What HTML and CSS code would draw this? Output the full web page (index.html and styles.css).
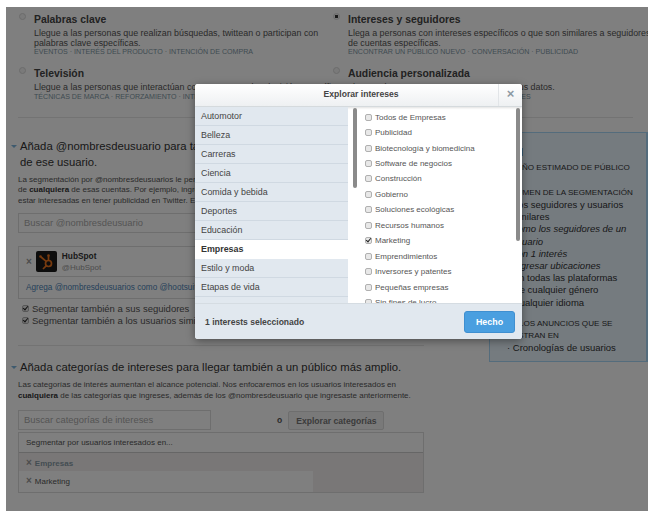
FILE: index.html
```html
<!DOCTYPE html>
<html lang="es">
<head>
  <meta charset="UTF-8">
  <title>Explorar intereses</title>
  <link rel="stylesheet" href="styles.css">
</head>
<body>

  <div class="screen">

    <div class="options">
      <div class="option">
        <input type="radio" name="kind">
        <div>
          <h3>Palabras clave</h3>
          <p>Llegue a las personas que realizan búsquedas, twittean o participan con<br>palabras clave específicas.</p>
          <p class="tags">EVENTOS · INTERÉS DEL PRODUCTO · INTENCIÓN DE COMPRA</p>
        </div>
      </div>
      <div class="option">
        <input type="radio" name="kind" checked>
        <div>
          <h3>Intereses y seguidores</h3>
          <p>Llega a personas con intereses específicos o que son similares a seguidores<br>de cuentas específicas.</p>
          <p class="tags">ENCONTRAR UN PÚBLICO NUEVO · CONVERSACIÓN · PUBLICIDAD</p>
        </div>
      </div>
      <div class="option">
        <input type="radio" name="kind">
        <div>
          <h3>Televisión</h3>
          <p>Llegue a las personas que interactúan con programas de televisión específicos.</p>
          <p class="tags">TÉCNICAS DE MARCA · REFORZAMIENTO · INTERACCIÓN</p>
        </div>
      </div>
      <div class="option">
        <input type="radio" name="kind">
        <div>
          <h3>Audiencia personalizada</h3>
          <p>Llegue a las personas que ya conoce con sus datos.</p>
          <p class="tags">CAMPAÑAS DE CORREO · LISTAS · REDES SOCIALES</p>
        </div>
      </div>
    </div>

    <div class="content">
      <div class="main">
        <section class="block">
          <h2>Añada @nombresdeusuario para targetizar a seguidores<br>de ese usuario.</h2>
          <p class="intro">La segmentación por @nombresdeusuarios le permite llegar a personas similares a los seguidores<br>de <b>cualquiera</b> de esas cuentas. Por ejemplo, ingresa @tuempresa para llegar a quienes pueden<br>estar interesadas en tener publicidad en Twitter. Escribe al menos una cuenta.</p>
          <div class="search">Buscar @nombresdeusuario</div>
          <div class="account-box">
            <div class="account">
              <span class="remove">×</span>
              <svg class="avatar" viewBox="0 0 21 21">
                <rect width="21" height="21" rx="2" fill="#1b1b1b"/>
                <g fill="none" stroke="#f0761e" stroke-width="1.7">
                  <circle cx="12.5" cy="12.5" r="3"/>
                  <path d="M12.5 9.5V5M10.2 10.4L5 6M10.4 14.6L7 18"/>
                </g>
                <circle cx="12.5" cy="4.5" r="1.3" fill="#f0761e"/>
                <circle cx="4.5" cy="5.5" r="1.3" fill="#f0761e"/>
              </svg>
              <div>
                <div class="account-name">HubSpot</div>
                <div class="account-handle">@HubSpot</div>
              </div>
            </div>
            <div class="account-hint">Agrega @nombresdeusuarios como @hootsuite o @twitter para ampliar tu alcance</div>
          </div>
          <label class="check-row"><input type="checkbox" checked>Segmentar también a sus seguidores</label>
          <label class="check-row"><input type="checkbox" checked>Segmentar también a los usuarios similares</label>
        </section>

        <section class="block">
          <h2>Añada categorías de intereses para llegar también a un público más amplio.</h2>
          <p class="intro">Las categorías de interés aumentan el alcance potencial. Nos enfocaremos en los usuarios interesados en<br><b>cualquiera</b> de las categorías que ingreses, además de los @nombresdeusuario que ingresaste anteriormente.</p>
          <div class="category-search">
            <div class="search">Buscar categorías de intereses</div>
            <span class="or">o</span>
            <div class="browse">Explorar categorías</div>
          </div>
          <div class="picked">
            <div class="picked-head">Segmentar por usuarios interesados en...</div>
            <div class="picked-group"><span class="remove">×</span>Empresas</div>
            <div class="picked-item"><span class="remove">×</span>Marketing</div>
          </div>
        </section>
      </div>

      <aside class="summary">
        <h4>Total</h4>
        <p class="summary-label">TAMAÑO ESTIMADO DE PÚBLICO</p>
        <p class="summary-label spaced">RESUMEN DE LA SEGMENTACIÓN</p>
        <ul>
          <li>Los seguidores y usuarios similares</li>
          <li><i>como los seguidores de un usuario</i></li>
          <li><i>con 1 interés</i></li>
          <li><i>Ingresar ubicaciones</i></li>
          <li>En todas las plataformas</li>
          <li>De cualquier género</li>
          <li>Cualquier idioma</li>
        </ul>
        <p class="summary-label tight">VER LOS ANUNCIOS QUE SE<br>MUESTRAN EN</p>
        <ul>
          <li>Cronologías de usuarios</li>
        </ul>
      </aside>
    </div>

    <div class="dim"></div>

    <div class="modal">
      <div class="modal-head">
        <div class="modal-title">Explorar intereses</div>
        <div class="modal-close">×</div>
      </div>
      <div class="modal-body">
        <ul class="topics">
          <li>Automotor</li>
          <li>Belleza</li>
          <li>Carreras</li>
          <li>Ciencia</li>
          <li>Comida y bebida</li>
          <li>Deportes</li>
          <li>Educación</li>
          <li class="active">Empresas</li>
          <li>Estilo y moda</li>
          <li>Etapas de vida</li>
          <li>Eventos</li>
        </ul>
        <div class="interests">
          <label><input type="checkbox">Todos de Empresas</label>
          <label><input type="checkbox">Publicidad</label>
          <label><input type="checkbox">Biotecnología y biomedicina</label>
          <label><input type="checkbox">Software de negocios</label>
          <label><input type="checkbox">Construcción</label>
          <label><input type="checkbox">Gobierno</label>
          <label><input type="checkbox">Soluciones ecológicas</label>
          <label><input type="checkbox">Recursos humanos</label>
          <label><input type="checkbox" checked>Marketing</label>
          <label><input type="checkbox">Emprendimientos</label>
          <label><input type="checkbox">Inversores y patentes</label>
          <label><input type="checkbox">Pequeñas empresas</label>
          <label><input type="checkbox">Sin fines de lucro</label>
        </div>
        <div class="scrollbar scrollbar-left"></div>
        <div class="scrollbar scrollbar-right"></div>
      </div>
      <div class="modal-foot">
        <span class="selected-count">1 interests seleccionado</span>
        <button type="button" class="done">Hecho</button>
      </div>
    </div>

  </div>

</body>
</html>
```

FILE: styles.css
```css
* {
  box-sizing: border-box;
}

body {
  margin: 0;
  background: #fff;
  font-family: 'Liberation Sans', Arial, sans-serif;
  color: #444;
}

h2, h3, h4, p, ul {
  margin: 0;
  padding: 0;
}

ul {
  list-style: none;
}

.screen {
  position: relative;
  width: 642px;
  height: 504px;
  margin: 7px 0 0 6px;
  background: #fff;
  overflow: hidden;
}

.dim {
  position: absolute;
  inset: 0;
  background: rgba(0, 0, 0, 0.5);
}

/* audience options */
.options {
  display: grid;
  grid-template-columns: 314px 1fr;
  grid-auto-rows: 54px;
  height: 111px;
  margin: 0 15px 0 12px;
  border-bottom: 1px solid #e6e6e6;
}

.option {
  display: flex;
  padding-top: 6px;
}

.option input[type="radio"] {
  appearance: none;
  flex: none;
  width: 7px;
  height: 7px;
  margin: 0 8px 0 1px;
  border-radius: 50%;
  background: #f4f4f4;
  border: 1px solid #d8d8d8;
}

.option input[type="radio"]:checked {
  background: radial-gradient(circle, #333 0 1.4px, #f4f4f4 2px);
}

.option h3 {
  font-size: 10.4px;
  line-height: 14px;
  color: #444;
}

.option p {
  font-size: 8.9px;
  line-height: 9.7px;
  color: #555;
  white-space: nowrap;
}

.option h3 + p {
  margin-top: 2px;
}

.option .tags {
  font-size: 7.1px;
  color: #7f97a5;
}

/* main column */
.content {
  display: flex;
  justify-content: space-between;
}

.main {
  width: 418px;
  margin-top: 20px;
  padding-left: 12px;
}

.block h2 {
  position: relative;
  padding-left: 2px;
  font-size: 11.3px;
  font-weight: normal;
  line-height: 16px;
  color: #333;
  white-space: nowrap;
}

.block h2::before {
  content: "";
  position: absolute;
  left: -7px;
  top: 7px;
  border: 3px solid transparent;
  border-top-color: #7db4dc;
  border-bottom-width: 0;
}

.intro {
  margin-top: 5px;
  font-size: 8px;
  line-height: 10.4px;
  color: #555;
  white-space: nowrap;
}

.intro b {
  color: #333;
}

.search {
  height: 20px;
  margin-top: 7px;
  padding-left: 5px;
  border: 1px solid #ddd;
  background: #fff;
  font-size: 9.4px;
  line-height: 18px;
  color: #aaa;
  white-space: nowrap;
}

.account-box {
  margin-top: 13px;
  border: 1px solid #ddd;
}

.account {
  display: flex;
  align-items: center;
  height: 30px;
  padding-left: 7px;
  border-bottom: 1px solid #ddd;
}

.remove {
  margin-right: 3px;
  font-size: 10px;
  font-weight: bold;
  color: #999;
}

.avatar {
  flex: none;
  width: 21px;
  height: 21px;
  margin: 0 5px 0 1px;
}

.account-name {
  font-size: 8.3px;
  font-weight: bold;
  line-height: 11px;
  color: #333;
}

.account-handle {
  font-size: 8px;
  line-height: 11px;
  color: #999;
}

.account-hint {
  height: 21px;
  padding-left: 7px;
  font-size: 8.2px;
  line-height: 21px;
  color: #4c83b5;
  white-space: nowrap;
  overflow: hidden;
}

.check-row {
  display: flex;
  align-items: center;
  height: 12px;
  font-size: 9.5px;
  color: #555;
  white-space: nowrap;
}

.account-box + .check-row {
  margin-top: 3px;
}

input[type="checkbox"] {
  appearance: none;
  position: relative;
  flex: none;
  width: 7px;
  height: 7px;
  margin: 0 3px 0 0;
  border: 1px solid #b0b0b0;
  border-radius: 2px;
  background: #e8e8e8;
}

input[type="checkbox"]:checked::after {
  content: "";
  position: absolute;
  left: 1px;
  top: -1px;
  width: 2px;
  height: 4px;
  border: solid #222;
  border-width: 0 1.5px 1.5px 0;
  transform: rotate(40deg);
}

.check-row input {
  margin-left: 4px;
}

.block + .block {
  margin-top: 19px;
  padding-top: 13px;
  border-top: 1px solid #e6e6e6;
}

.category-search {
  display: flex;
  align-items: center;
  margin-top: 9px;
}

.category-search .search {
  width: 193px;
  height: 20px;
  margin-top: 0;
}

.or {
  margin-left: 66px;
  font-size: 8.5px;
  font-weight: bold;
  color: #555;
}

.browse {
  margin-left: 6px;
  padding: 0 7px;
  height: 19px;
  border: 1px solid #ddd;
  border-radius: 2px;
  background: #f2f2f2;
  font-size: 8.6px;
  font-weight: bold;
  line-height: 18px;
  color: #777;
  white-space: nowrap;
}

.picked {
  width: 406px;
  margin-top: 2px;
  border: 1px solid #ddd;
  background: #f2eeee;
}

.picked-head {
  height: 20px;
  padding-left: 7px;
  border-bottom: 1px solid #ccc;
  background: #fff;
  font-size: 8px;
  line-height: 19px;
  color: #555;
}

.picked-group, .picked-item {
  width: 294px;
  padding-left: 7px;
  font-size: 8px;
}

.picked-group {
  height: 18px;
  line-height: 20px;
  font-weight: bold;
  color: #889ba6;
}

.picked-item {
  height: 21px;
  line-height: 20px;
  background: #fff;
  color: #555;
}

/* summary column */
.summary {
  width: 159px;
  height: 230px;
  margin-top: 14px;
  padding: 13px 8px 0 10px;
  border: 1px solid #a8d8f8;
  border-right-width: 2px;
  background: #eaf6ff;
  font-size: 9.5px;
  color: #333;
}

.summary h4 {
  font-size: 10px;
  line-height: 14px;
}

.summary-label {
  margin-top: 2px;
  font-size: 8.1px;
  line-height: 12px;
  color: #333;
  white-space: nowrap;
}

.summary-label.spaced {
  margin-top: 13px;
}

.summary-label.tight {
  margin-top: 9px;
}

.summary li {
  padding-left: 12px;
  line-height: 12.2px;
  text-indent: -5px;
}

.summary li::before {
  content: "· ";
}

/* interests dialog */
.modal {
  position: absolute;
  left: 189px;
  top: 77px;
  width: 327px;
  height: 255px;
  border-radius: 3px;
  background: #fff;
  box-shadow: 0 2px 8px rgba(0, 0, 0, 0.4);
  overflow: hidden;
}

.modal-head {
  display: flex;
  height: 23px;
  border-bottom: 1px solid #d5dadd;
  background: linear-gradient(#fff, #eef0f2);
  box-shadow: 0 1px 2px rgba(0, 0, 0, 0.12);
}

.modal-title {
  flex: 1;
  padding-left: 29px;
  font-size: 8.6px;
  font-weight: bold;
  line-height: 21px;
  text-align: center;
  color: #444;
}

.modal-close {
  width: 24px;
  border-left: 1px solid #e2e5e8;
  font-size: 13px;
  font-weight: bold;
  line-height: 20px;
  text-align: center;
  color: #8c99a3;
}

.modal-body {
  position: relative;
  display: flex;
  height: 196px;
  overflow: hidden;
}

.topics {
  flex: none;
  width: 153px;
  background: #e1e8ef;
}

.topics li {
  height: 19px;
  padding-left: 6px;
  border-bottom: 1.5px solid #d0d9e2;
  font-size: 8.9px;
  line-height: 18px;
  color: #444;
}

.topics li.active {
  background: #fff;
  border-bottom-color: #fff;
  font-weight: bold;
  color: #333;
}

.interests {
  flex: 1;
  padding: 2.5px 0 0 17px;
}

.interests label {
  display: flex;
  align-items: center;
  height: 15.45px;
  font-size: 8px;
  color: #555;
  white-space: nowrap;
}

.scrollbar {
  position: absolute;
  top: 1px;
  width: 4px;
  border-radius: 2px;
  background: #8a8a8a;
}

.scrollbar-left {
  left: 158px;
  height: 80px;
}

.scrollbar-right {
  right: 2px;
  height: 133px;
}

.modal-foot {
  display: flex;
  align-items: center;
  justify-content: space-between;
  height: 36px;
  padding: 0 7px 0 10px;
  border-top: 1px solid #d5dce2;
  background: #e1e8ef;
}

.selected-count {
  font-size: 8.55px;
  font-weight: bold;
  color: #444;
}

.done {
  width: 51px;
  height: 22px;
  padding: 0;
  border: 1px solid #3f8fd0;
  border-radius: 3px;
  background: #4a9fe0;
  font-family: inherit;
  font-size: 8.9px;
  font-weight: bold;
  color: #fff;
}
```
